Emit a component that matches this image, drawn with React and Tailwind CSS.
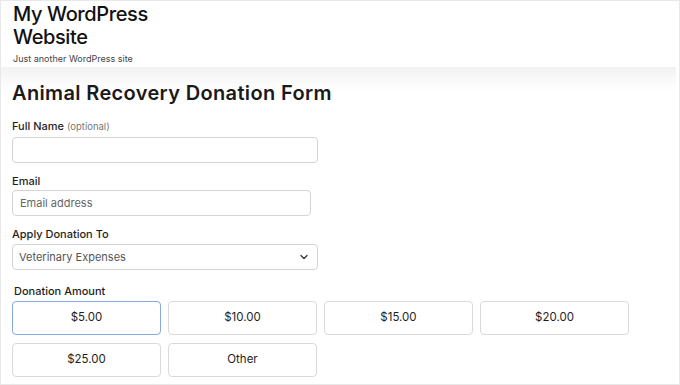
import { ChevronDown } from "lucide-react";

const amounts = ["$5.00", "$10.00", "$15.00", "$20.00", "$25.00", "Other"];

const Label = ({ children, className = "" }) => (
  <label className={`block text-[11px] leading-[14px] font-medium text-[#1e1e1e] ${className}`}>
    {children}
  </label>
);

export default function App() {
  return (
    <div
      className="w-[680px] h-[385px] border border-[#e8e8e8] bg-white overflow-hidden text-[#1e1e1e]"
      style={{ fontFamily: "Inter, 'Noto Sans', sans-serif" }}
    >
      {/* Site header */}
      <header className="h-[66px] pl-[12px] pr-[11px] pt-[2px]">
        <h1 className="text-[20px] leading-[23px] font-medium tracking-[-0.4px] text-[#111]">
          My WordPress
          <br />
          Website
        </h1>
        <p className="mt-[4px] text-[9px] leading-[12px] text-[#444]">
          Just another WordPress site
        </p>
      </header>

      {/* Form */}
      <main className="mr-[3px] pl-[11px] pt-[14px] bg-[linear-gradient(to_bottom,#f2f2f2_0px,#ffffff_24px)]">
        <h2 className="text-[20px] leading-[24px] font-semibold tracking-[0.35px] text-[#1a1a1a]">
          Animal Recovery Donation Form
        </h2>

        <Label className="mt-[14px]">
          Full Name <span className="text-[9.5px] font-normal text-[#777]">(optional)</span>
        </Label>
        <input className="mt-[3px] block w-[306px] h-[26px] rounded-[4px] border border-[#d4d4d4] bg-white px-[7px] text-[11px]" />

        <Label className="mt-[11px]">Email</Label>
        <input
          placeholder="Email address"
          className="mt-[2px] block w-[299px] h-[26px] rounded-[4px] border border-[#d4d4d4] bg-white px-[7px] text-[11px] placeholder:text-[#666]"
        />

        <Label className="mt-[11px]">Apply Donation To</Label>
        <div className="mt-[3px] flex items-center justify-between w-[306px] h-[26px] rounded-[4px] border border-[#d4d4d4] bg-white pl-[6px] pr-[7px] text-[11px] text-[#555]">
          <span>Veterinary Expenses</span>
          <ChevronDown size={12} strokeWidth={2.5} className="text-[#333]" />
        </div>

        <Label className="mt-[14px] ml-[2px]">Donation Amount</Label>
        <div className="mt-[3px] grid grid-cols-[149px_149px_149px_149px] gap-x-[7px] gap-y-[8px]">
          {amounts.map((a, i) => (
            <button
              key={a}
              className={`h-[34px] rounded-[4px] border bg-white text-[11.5px] text-[#1e1e1e] ${
                i === 0 ? "border-[#86a8dc]" : "border-[#dadada]"
              }`}
            >
              {a}
            </button>
          ))}
        </div>
      </main>
    </div>
  );
}
